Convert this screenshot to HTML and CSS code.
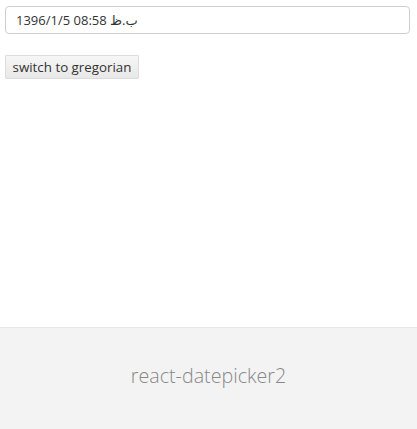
FILE: index.html
```html
<!DOCTYPE html>
<html>
<head>
<meta charset="utf-8">
<link rel="stylesheet" href="styles.css">
</head>
<body>
<div class="page">
  <main class="main">
    <input class="date-input" type="text" value="1396/1/5 08:58 ب.ظ" dir="ltr">
    <div class="actions">
      <button class="switch-btn">switch to gregorian</button>
    </div>
  </main>
  <footer class="footer">react-datepicker2</footer>
</div>
</body>
</html>
```

FILE: styles.css
```css
html, body {
  margin: 0;
  padding: 0;
  background: #fff;
  font-family: "Open Sans", "DejaVu Sans", sans-serif;
}
.page {
  display: flex;
  flex-direction: column;
  height: 429px;
  overflow: hidden;
}
.main {
  flex: 1;
  padding: 6px 7px 0 5px;
  display: flex;
  flex-direction: column;
  align-items: flex-start;
}
.date-input {
  box-sizing: border-box;
  width: 100%;
  height: 28px;
  margin: 0;
  padding: 0 10px;
  border: 1px solid #cfcfcf;
  border-radius: 4px;
  font-family: "Open Sans", "DejaVu Sans", sans-serif;
  font-size: 13px;
  color: #333;
  outline: none;
}
.actions {
  margin-top: 21px;
}
.switch-btn {
  box-sizing: border-box;
  width: 134px;
  height: 24px;
  margin: 0;
  padding: 0 6px;
  border: 1px solid #dcdcdc;
  border-radius: 1px;
  background: linear-gradient(#f6f6f6, #e8e8e8);
  font-family: "Open Sans", sans-serif;
  font-size: 13.33px;
  color: #333;
  white-space: nowrap;
}
.footer {
  flex: 0 0 auto;
  box-sizing: border-box;
  height: 102px;
  padding-bottom: 6px;
  border-top: 1px solid #e6e6e6;
  background: #f3f3f3;
  display: flex;
  align-items: center;
  justify-content: center;
  font-family: "Open Sans", sans-serif;
  font-weight: 300;
  font-size: 19.7px;
  line-height: 1;
  color: #888;
}
```
